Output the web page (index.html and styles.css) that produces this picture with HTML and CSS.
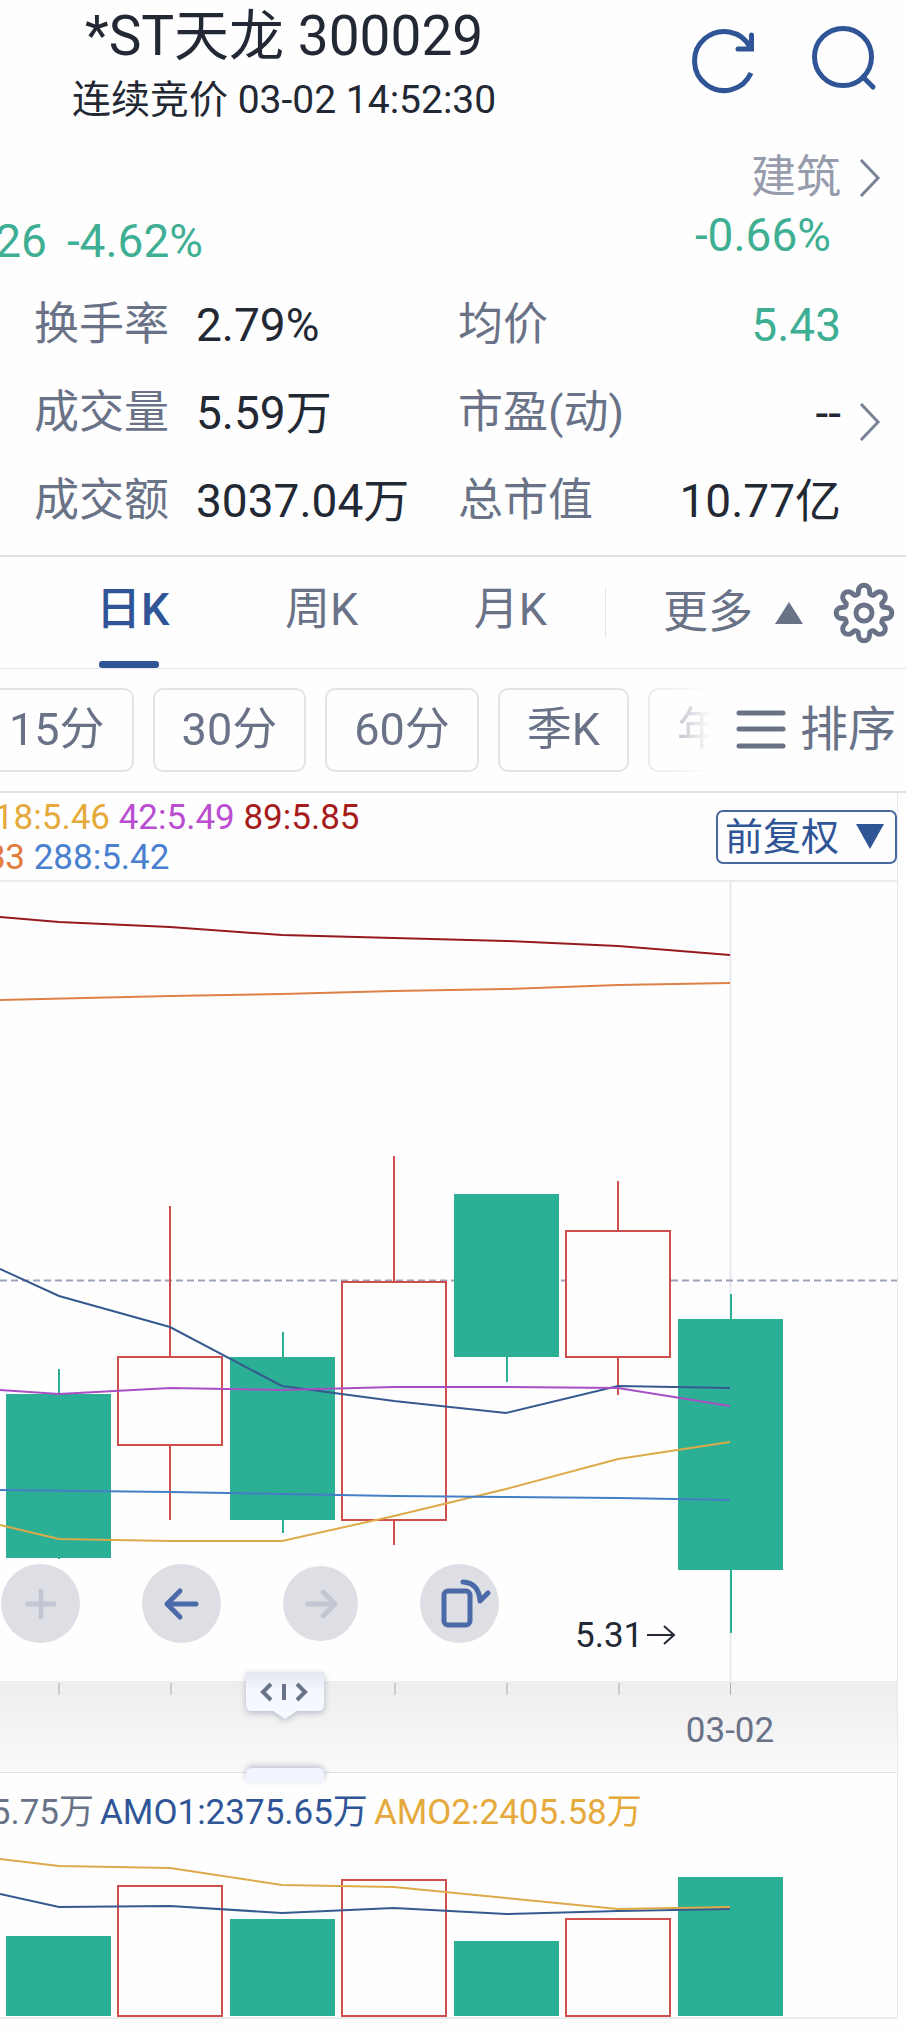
FILE: index.html
```html
<!DOCTYPE html>
<html lang="zh-CN">
<head>
    <meta charset="UTF-8">
    <meta name="viewport" content="width=device-width, initial-scale=1.0">
    <title>*ST天龙 300029</title>
    <link rel="stylesheet" href="styles.css">
</head>
<body>
    <header class="top-bar">
        <div class="stock">
            <h1>*ST天龙 300029</h1>
            <p>连续竞价 03-02 14:52:30</p>
        </div>
        <div class="actions">
            <button class="icon-btn" type="button" aria-label="刷新">
                <svg width="68" height="68" viewBox="0 0 68 68" fill="none" stroke="#2f5597" stroke-width="5">
                    <path d="M61 47A29.500 29.500 0 1 1 60 21"/>
                    <path d="M61.500 9v14H48" stroke-linecap="round"/>
                </svg>
            </button>
            <button class="icon-btn" type="button" aria-label="搜索">
                <svg width="68" height="68" viewBox="0 0 68 68" fill="none" stroke="#2f5597" stroke-width="5" stroke-linecap="round">
                    <circle cx="33" cy="31" r="28.500"/>
                    <path d="M53 51l10 10"/>
                </svg>
            </button>
        </div>
    </header>

    <section class="quote">
        <div class="change"><span>-0.26</span><span>-4.62%</span></div>
        <a class="sector" href="#">
            <span class="sector-name">建筑</span>
            <svg class="chevron" width="22" height="38" viewBox="0 0 22 38"><path d="M2 1l17 18L2 37"/></svg>
            <span class="sector-change">-0.66%</span>
        </a>
    </section>

    <section class="stats">
        <dl>
            <dt>换手率</dt><dd>2.79%</dd>
            <dt>均价</dt><dd class="num down">5.43</dd>
            <dt>成交量</dt><dd>5.59万</dd>
            <dt>市盈(动)</dt><dd class="num">--</dd>
            <dt>成交额</dt><dd>3037.04万</dd>
            <dt>总市值</dt><dd class="num">10.77亿</dd>
        </dl>
        <a class="more-stats" href="#" aria-label="更多行情">
            <svg class="chevron" width="22" height="38" viewBox="0 0 22 38"><path d="M2 1l17 18L2 37"/></svg>
        </a>
    </section>

    <nav class="tabs">
        <div class="tab-list">
            <button class="tab active" type="button">日K</button>
            <button class="tab" type="button">周K</button>
            <button class="tab" type="button">月K</button>
        </div>
        <button class="more" type="button">更多
            <svg width="28" height="22" viewBox="0 0 28 22"><path d="M14 0l14 22H0z" fill="#697287"/></svg>
        </button>
        <button class="icon-btn" type="button" aria-label="设置">
            <svg width="62" height="62" viewBox="-31 -31 62 62" fill="none" stroke="#697287" stroke-width="5">
                <circle r="8"/>
                <path id="gear"/>
            </svg>
        </button>
    </nav>

    <div class="periods">
        <div class="chips">
            <button class="chip" type="button">15分</button>
            <button class="chip" type="button">30分</button>
            <button class="chip" type="button">60分</button>
            <button class="chip" type="button">季K</button>
            <button class="chip" type="button">年K</button>
        </div>
        <button class="sort" type="button">
            <svg width="50" height="40" viewBox="0 0 50 40" stroke="#697287" stroke-width="5" stroke-linecap="round">
                <path d="M3 3h44M3 19h44M3 36h44"/>
            </svg>
            排序
        </button>
    </div>

    <main class="panel">
        <div class="legend">
            <div class="ma">
                <p><span class="clip ma18"><span class="c-yellow">18:5.46</span></span> <span class="c-purple">42:5.49</span> <span class="c-red">89:5.85</span></p>
                <p><span class="clip"><span class="c-orange">5.83</span></span> <span class="c-blue">288:5.42</span></p>
            </div>
            <button class="adjust" type="button">前复权
                <svg width="28" height="25" viewBox="0 0 28 25"><path d="M0 0h28L14 25z" fill="#2f5597"/></svg>
            </button>
        </div>

        <div class="chart">
            <svg class="plot" viewBox="0 0 897 799">
                <path class="grid" d="M730.500 0V799"/>
                <path class="last" d="M0 398.500H897"/>
                <g id="candles"></g>
                <g class="lines">
                    <polyline class="l-red" points="0,35 59,40 170,45 282,53 394,56 506,59 618,64 730,73"/>
                    <polyline class="l-orange" points="0,118 170,114 282,112 394,109 506,107 618,103 730,101"/>
                    <polyline class="l-navy" points="0,387 59,414 170,445 282,504 394,519 506,531 618,504 730,506"/>
                    <polyline class="l-purple" points="0,508 59,512 170,506 282,508 394,505 506,505 618,506 730,524"/>
                    <polyline class="l-yellow" points="0,643 59,657 170,659 282,659 394,634 506,607 618,577 730,560"/>
                    <polyline class="l-blue" points="0,608 170,610 282,612 394,614 506,615 618,616 730,618"/>
                </g>
                <text x="575" y="765" class="low">5.31</text>
                <path class="arrow" d="M647 753h27M664 744l10 9-10 9"/>
            </svg>
            <div class="tools">
                <button type="button" class="off" aria-label="放大">
                    <svg width="44" height="44" viewBox="0 0 44 44"><path d="M22 9v26M9 22h26"/></svg>
                </button>
                <button type="button" aria-label="左移">
                    <svg width="44" height="44" viewBox="0 0 44 44"><path d="M36 22H8M20 9L7 22l13 13"/></svg>
                </button>
                <button type="button" class="off small" aria-label="右移">
                    <svg width="44" height="44" viewBox="0 0 44 44"><path d="M9 22h27M24 10l12 12-12 12"/></svg>
                </button>
                <button type="button" aria-label="横屏">
                    <svg width="56" height="56" viewBox="0 0 56 56"><rect x="12" y="15" width="26" height="34" rx="4"/><path d="M31 6Q47 7 48 25L56 17"/></svg>
                </button>
            </div>
        </div>

        <div class="axis">
            <svg class="plot" viewBox="0 0 897 91">
                <path class="ticks" d="M59 2v12M171 2v12M283 2v12M395 2v12M507 2v12M619 2v12M730.500 2v12"/>
                <text x="730" y="61" text-anchor="middle" class="date">03-02</text>
            </svg>
            <svg class="handle" width="100" height="126" viewBox="0 0 100 126">
                <defs>
                    <linearGradient id="fade" x2="0" y2="1">
                        <stop offset="0" stop-color="#e3e6f0"/>
                        <stop offset="0.400" stop-color="#f5f8ff"/>
                    </linearGradient>
                </defs>
                <path class="grip" d="M11 3h78v33q0 6-6 6H62l-12 8-12-8H17q-6 0-6-6z" fill="url(#fade)"/>
                <path class="grip low-grip" d="M11 113v-8q0-6 6-6h66q6 0 6 6v8z"/>
                <path class="marks" d="M36 15l-8 8 8 8M49 15v16M62 15l8 8-8 8"/>
            </svg>
        </div>

        <div class="volume">
            <p class="amo"><span class="clip"><span>3035.75万</span></span><span class="c-navy">AMO1:2375.65万</span><span class="c-yellow">AMO2:2405.58万</span></p>
            <svg class="plot" viewBox="0 0 897 166">
                <g id="bars"></g>
                <g class="lines">
                    <polyline class="l-navy" points="0,43 59,56 170,55 282,62 394,57 506,63 618,60 730,58"/>
                    <polyline class="l-yellow" points="0,8 59,15 170,17 282,34 394,36 506,47 618,58 730,56"/>
                </g>
            </svg>
        </div>
    </main>

    <script src="chart.js"></script>
</body>
</html>
```
FILE: styles.css
```css
* {
    box-sizing: border-box;
}

body {
    margin: 0;
    background: #fefefe;
    color: #222834;
    font-family: Roboto, "Noto Sans CJK SC", sans-serif;
    font-size: 45px;
    line-height: 60px;
    overflow-x: hidden;
}

h1, p, dl, dd {
    margin: 0;
}

button {
    padding: 0;
    border: 0;
    background: none;
    color: #697287;
    font: inherit;
    white-space: nowrap;
}

a {
    color: inherit;
    text-decoration: none;
}

svg {
    display: block;
}

.chevron {
    fill: none;
    stroke: #7b8398;
    stroke-width: 3;
}

/* Header */
.top-bar {
    display: flex;
    justify-content: space-between;
    height: 140px;
    padding: 0 28px 0 72px;
}

.stock {
    text-align: center;
}

.stock h1 {
    font-size: 55px;
    font-weight: 400;
    line-height: 72px;
}

.stock p {
    font-size: 39px;
    line-height: 56px;
}

.actions {
    display: flex;
    align-items: flex-start;
    gap: 52px;
    padding-top: 26px;
}

.icon-btn {
    display: flex;
    align-items: center;
}

/* Quote */
.quote {
    display: flex;
    justify-content: space-between;
    height: 138px;
    padding-right: 25px;
}

.change {
    display: flex;
    justify-content: flex-end;
    gap: 20px;
    width: 203px;
    padding-top: 71px;
    color: #3faf94;
    font-size: 46px;
    overflow: hidden;
}

.sector {
    display: grid;
    grid-template-columns: auto 22px;
    column-gap: 18px;
    align-items: center;
    align-content: start;
    padding-top: 8px;
}

.sector-name {
    color: #969cab;
    text-align: right;
}

.sector-change {
    padding-right: 10px;
    color: #3faf94;
    font-size: 46px;
    line-height: 54px;
}

/* Stats */
.stats {
    display: flex;
    align-items: center;
    height: 279px;
    padding: 0 25px 8px 34px;
    border-bottom: 2px solid #e0e0e0;
}

.stats dl {
    flex: 1;
    display: grid;
    grid-template-columns: 162px 262px 200px 1fr;
    line-height: 88px;
}

.stats dt {
    color: #697287;
    white-space: nowrap;
}

.stats dd {
    font-size: 46px;
}

.stats .num {
    text-align: right;
}

.stats .down {
    color: #3faf94;
}

.more-stats {
    margin: 18px 0 0 18px;
}

/* Tabs */
.tabs {
    display: flex;
    align-items: center;
    height: 112px;
    padding-right: 11px;
    border-bottom: 1px solid #e3e4e8;
}

.tab-list {
    flex: 1;
    display: flex;
    justify-content: space-between;
    margin-right: 58px;
    padding-left: 96px;
}

.tab {
    position: relative;
    height: 110px;
    padding-bottom: 5px;
}

.tab.active {
    color: #2f5597;
    font-weight: 500;
}

.tab.active::after {
    content: "";
    position: absolute;
    left: 3px;
    bottom: 0;
    width: 60px;
    height: 7px;
    border-radius: 3px;
    background: #2f5597;
}

.more {
    display: flex;
    align-items: center;
    gap: 22px;
    height: 50px;
    margin-right: 30px;
    padding-left: 57px;
    border-left: 1px solid #e3e4e8;
    line-height: 56px;
}

/* Period chips */
.periods {
    display: flex;
    align-items: center;
    justify-content: space-between;
    height: 124px;
    padding-right: 10px;
    border-bottom: 2px solid #e0e1e3;
}

.chips {
    display: flex;
    gap: 19px;
    width: 732px;
    margin-left: -20px;
    overflow: hidden;
    -webkit-mask-image: linear-gradient(to right, #000 88%, transparent 100%);
    mask-image: linear-gradient(to right, #000 88%, transparent 100%);
}

.chip {
    flex: none;
    height: 84px;
    padding: 0 27px;
    border: 2px solid #e3e4e8;
    border-radius: 10px;
}

.sort {
    display: flex;
    align-items: center;
    gap: 14px;
    font-size: 48px;
}

/* K line panel */
.panel {
    margin-right: 8px;
    border-right: 1px solid #e6e8ee;
    border-bottom: 2px solid #ececee;
}

.legend {
    display: flex;
    justify-content: space-between;
    align-items: center;
    height: 89px;
    border-bottom: 2px solid #ececee;
    font-size: 35px;
    line-height: 40px;
    white-space: nowrap;
}

.ma {
    padding-top: 3px;
}

.clip {
    display: inline-flex;
    justify-content: flex-end;
    width: 25px;
    overflow: hidden;
    vertical-align: bottom;
}

.ma18 {
    width: 110px;
}

.c-yellow { color: #e5a93c; }
.c-purple { color: #b94fd0; }
.c-red { color: #a51c1c; }
.c-orange { color: #e07b3c; }
.c-blue { color: #4a80d0; }
.c-navy { color: #2f5597; }

.adjust {
    display: flex;
    align-items: center;
    gap: 17px;
    height: 54px;
    padding: 0 11px 0 7px;
    border: 2px solid #48699f;
    border-radius: 7px;
    color: #2f5597;
    font-size: 38px;
}

.plot {
    width: 100%;
    height: auto;
}

.chart,
.axis {
    position: relative;
}

.grid {
    stroke: #e6e8ee;
    stroke-width: 2;
}

.last {
    stroke: #9aa3b8;
    stroke-width: 2;
    stroke-dasharray: 7 4;
}

.up {
    fill: none;
    stroke: #cf4f4d;
    stroke-width: 2;
}

.up-body {
    fill: #fefefe;
    stroke: #cf4f4d;
    stroke-width: 2;
}

.dn {
    fill: #2bb096;
    stroke: #2bb096;
    stroke-width: 2;
}

.dn-body {
    fill: #2bb096;
}

.lines {
    fill: none;
    stroke-width: 2;
}

.l-red { stroke: #96191b; }
.l-orange { stroke: #dd8148; }
.l-navy { stroke: #365a8f; }
.l-purple { stroke: #a94fc4; }
.l-yellow { stroke: #dcaa49; }
.l-blue { stroke: #447fc6; }

.low {
    fill: #222834;
    font-size: 35px;
}

.arrow {
    fill: none;
    stroke: #222834;
    stroke-width: 2;
}

.tools {
    position: absolute;
    left: 1px;
    bottom: 38px;
    display: flex;
    align-items: center;
    gap: 62px;
}

.tools button {
    display: flex;
    align-items: center;
    justify-content: center;
    width: 79px;
    height: 79px;
    border-radius: 50%;
    background: #dedfe5;
}

.tools .small {
    width: 75px;
    height: 75px;
}

.tools svg {
    fill: none;
    stroke: #4a6ba8;
    stroke-width: 5;
    stroke-linecap: round;
    stroke-linejoin: round;
    overflow: visible;
}

.tools .off svg {
    stroke: #c3c6d2;
}

/* Time axis */
.axis {
    border-bottom: 1px solid #e0e1e5;
    background: linear-gradient(#ededed, #fafafa);
}

.ticks {
    stroke: #a6abb7;
    stroke-width: 1;
}

.date {
    fill: #697287;
    font-size: 35px;
}

.handle {
    position: absolute;
    left: 235px;
    top: -12px;
}

.grip {
    filter: drop-shadow(0 2px 3px rgba(90, 100, 130, 0.4));
}

.low-grip {
    fill: #f2f5ff;
    filter: drop-shadow(0 -2px 3px rgba(90, 100, 130, 0.4));
}

.marks {
    fill: none;
    stroke: #697287;
    stroke-width: 4;
}

/* Volume */
.amo {
    display: flex;
    gap: 6px;
    height: 78px;
    color: #697287;
    font-size: 35px;
    line-height: 80px;
    white-space: nowrap;
}

.amo .clip {
    width: 94px;
}
```
FILE: chart.js
```js
const STEP = 112;
const BODY = 105;

// [direction, high, top, bottom, low]
const candles = [
    ['dn', 487, 512, 676, 677],
    ['up', 324, 475, 563, 638],
    ['dn', 450, 475, 638, 651],
    ['up', 274, 400, 638, 663],
    ['dn', 312, 312, 475, 500],
    ['up', 299, 349, 475, 513],
    ['dn', 412, 437, 688, 751]
];

const volumes = [
    ['dn', 85],
    ['up', 35],
    ['dn', 68],
    ['up', 29],
    ['dn', 90],
    ['up', 68],
    ['dn', 26]
];

function body(dir, left, top, bottom) {
    const pad = dir === 'up' ? 1 : 0;
    return `<rect class="${dir}-body" x="${left}" y="${top}" width="${BODY - pad}" height="${bottom - top}"/>`;
}

document.getElementById('candles').innerHTML = candles.map(([dir, high, top, bottom, low], i) => {
    const x = 59 + i * STEP - (dir === 'up' ? 1 : 0);
    return `<path class="${dir}" d="M${x} ${high}V${top}M${x} ${bottom}V${low}"/>` + body(dir, 6 + i * STEP, top, bottom);
}).join('');

document.getElementById('bars').innerHTML = volumes.map(([dir, top], i) =>
    body(dir, 6 + i * STEP, top, 165)
).join('');

// Settings gear outline: eight rounded teeth
let d = '';
for (let i = 0; i < 8; i++) {
    const a = i * Math.PI / 4;
    const p = (r, off) => `${(r * Math.sin(a + off)).toFixed(1)} ${(-r * Math.cos(a + off)).toFixed(1)}`;
    d += `${i ? 'L' : 'M'}${p(20, -0.3)}L${p(23, -0.24)}A5.5 5.5 0 0 1 ${p(23, 0.24)}L${p(20, 0.3)}A4 4 0 0 0 ${p(20, Math.PI / 4 - 0.3)}`;
}
document.getElementById('gear').setAttribute('d', d + 'Z');
```
